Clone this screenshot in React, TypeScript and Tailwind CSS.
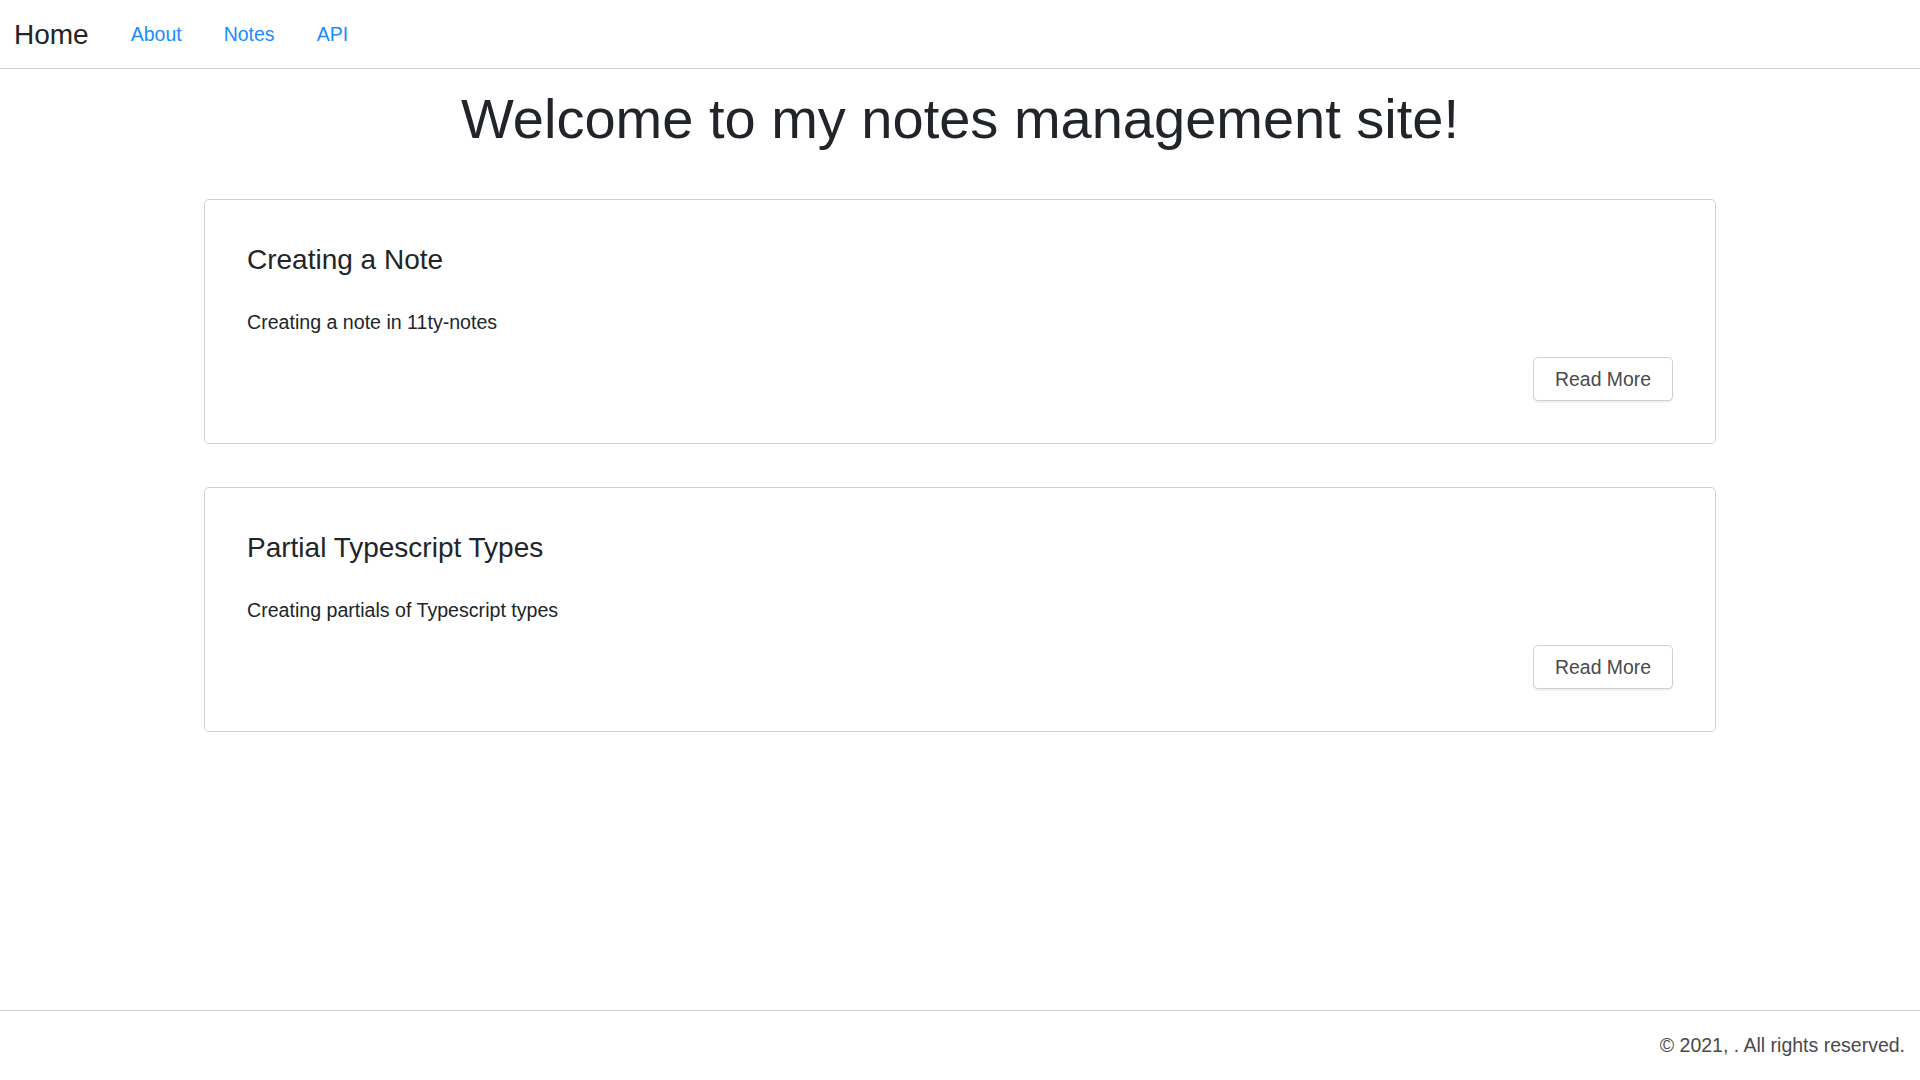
const notes = [
  { title: "Creating a Note", description: "Creating a note in 11ty-notes" },
  { title: "Partial Typescript Types", description: "Creating partials of Typescript types" },
]

const NoteCard = ({ title, description }: { title: string; description: string }) => {
  return (
    <div className="rounded-[5px] border border-[#d0d0d0] bg-white px-[42px] pb-[42px] pt-[43px]">
      <h3 className="text-[28px] leading-[1.2] text-[#212529]">{title}</h3>
      <p className="mt-[31px] text-[19.6px] leading-[1.5] text-[#212529]">{description}</p>
      <div className="mt-[20px] flex justify-end">
        <button className="h-[44px] rounded-[5px] border border-[#cfcfcf] bg-white px-[21px] text-[19.4px] leading-[1.5] text-[#4a4a4a] shadow-[0_2px_1px_rgba(0,0,0,0.06)]">
          Read More
        </button>
      </div>
    </div>
  )
}

export default function App() {
  return (
    <div className="flex min-h-screen flex-col bg-white font-['Liberation_Sans',Arial,sans-serif]">
      {/* Navbar */}
      <nav className="flex h-[69px] items-center border-b border-[#cfcfcf] px-[14px] pt-[2px]">
        <a className="mr-[21px] text-[28px] leading-[1.5] text-[#212529]" href="#">
          Home
        </a>
        <a className="px-[21px] text-[19.5px] leading-[1.5] text-[#1a8cff]" href="#">
          About
        </a>
        <a className="px-[21px] text-[19.5px] leading-[1.5] text-[#1a8cff]" href="#">
          Notes
        </a>
        <a className="px-[21px] text-[19.5px] leading-[1.5] text-[#1a8cff]" href="#">
          API
        </a>
      </nav>

      {/* Main */}
      <main className="flex-1">
        <h1 className="mt-[16px] text-center text-[56px] leading-[1.2] text-[#212529]">
          Welcome to my notes management site!
        </h1>
        <div className="mx-auto mt-[47px] flex w-[1512px] flex-col gap-[43px]">
          {notes.map((note) => (
            <NoteCard key={note.title} title={note.title} description={note.description} />
          ))}
        </div>
      </main>

      {/* Footer */}
      <footer className="flex h-[70px] items-center justify-end border-t border-[#cfcfcf] px-[15px]">
        <p className="text-[19.5px] leading-[1.5] text-[#4a4a4a]">© 2021, . All rights reserved.</p>
      </footer>
    </div>
  )
}
